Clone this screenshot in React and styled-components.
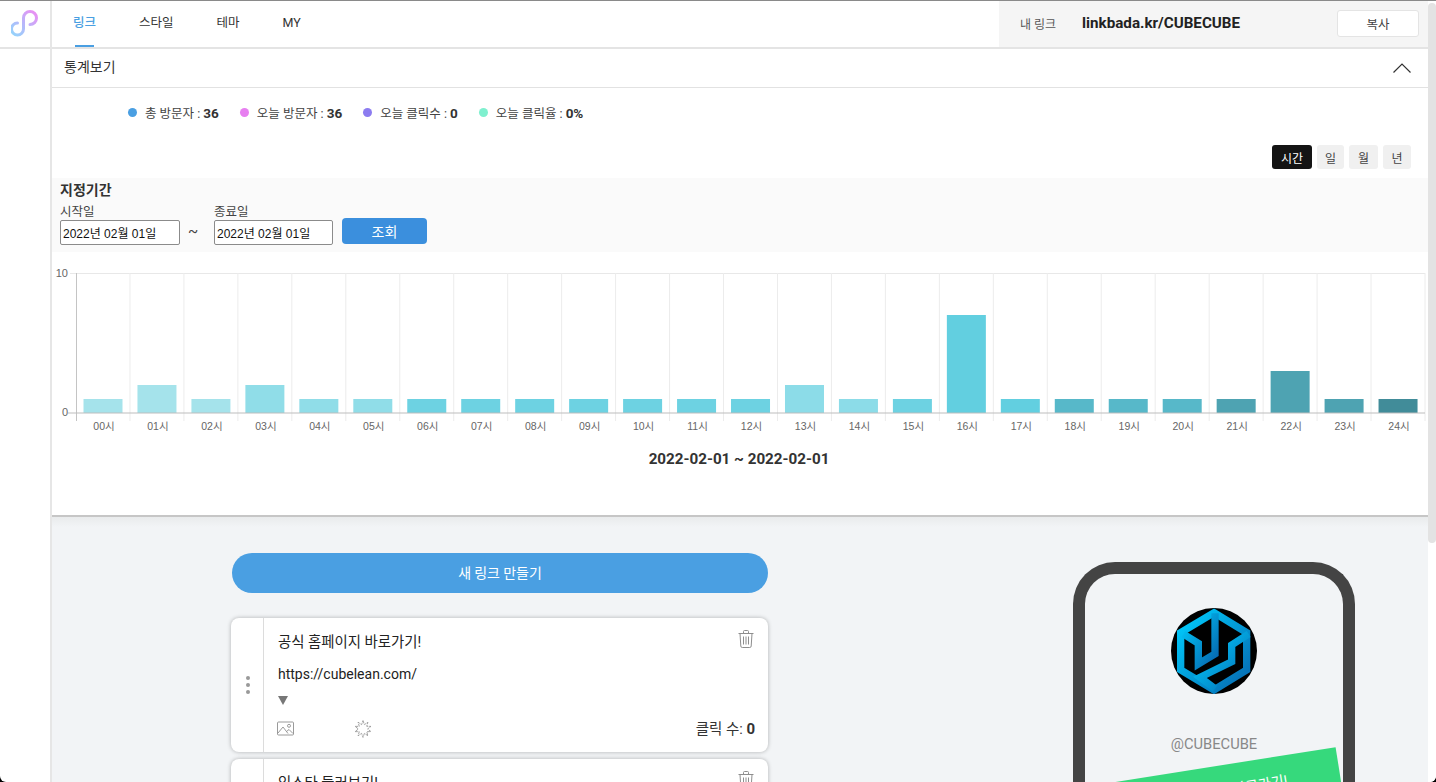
import React from 'react';
import styled, { createGlobalStyle } from 'styled-components';

const GlobalStyle = createGlobalStyle`
  html, body {
    margin: 0;
    padding: 0;
    height: 100%;
    overflow: hidden;
    background: #000;
  }
  * {
    box-sizing: border-box;
  }
  body {
    font-family: Roboto, "Noto Sans CJK KR", sans-serif;
    color: #333;
  }
`;

const Page = styled.div`
  display: flex;
  width: 1436px;
  height: 782px;
  overflow: hidden;
  background: #fff;
  border-top: 1px solid #8a8a8a;
  border-radius: 0 0 6px 6px;
`;

const Sidebar = styled.aside`
  flex: 0 0 52px;
  border-right: 2px solid #e6e6e6;
`;

const LogoCell = styled.div`
  display: flex;
  align-items: center;
  justify-content: center;
  height: 48px;
  border-bottom: 2px solid #e4e4e4;
  padding-bottom: 1px;
`;

const Main = styled.main`
  flex: 1;
  min-width: 0;
  display: flex;
  flex-direction: column;
`;

const ScrollTrack = styled.div`
  flex: 0 0 8px;
  background: #fff;
`;

const ScrollThumb = styled.div`
  height: 540px;
  margin-top: 2px;
  background: #e3e3e3;
  border-radius: 4px;
`;

const TopBar = styled.header`
  flex: 0 0 48px;
  display: flex;
  justify-content: space-between;
  border-bottom: 2px solid #e4e4e4;
`;

const Tabs = styled.nav`
  display: flex;
  gap: 43px;
  padding-left: 21px;
`;

const Tab = styled.a`
  position: relative;
  font-size: 12.5px;
  line-height: 43px;
  color: ${(p) => (p.$active ? '#4a9fe2' : '#333')};
  font-weight: ${(p) => (p.$active ? 500 : 400)};

  ${(p) =>
    p.$active &&
    `&::after {
      content: '';
      position: absolute;
      left: 2px;
      right: 2px;
      bottom: 0;
      height: 2px;
      background: #4a9fe2;
    }`}
`;

const MyLink = styled.div`
  width: 429px;
  display: flex;
  align-items: center;
  padding: 0 9px 2px 21px;
  background: #f5f5f5;
`;

const MyLinkLabel = styled.span`
  font-size: 12px;
  color: #555;
  width: 62px;
`;

const MyLinkUrl = styled.strong`
  flex: 1;
  font-size: 15.2px;
  font-weight: 700;
  color: #222;
`;

const CopyButton = styled.button`
  width: 82px;
  height: 27px;
  background: #fff;
  border: 1px solid #e4e4e4;
  border-radius: 3px;
  font: 12.5px "Noto Sans CJK KR", sans-serif;
  color: #444;
`;

const StatsPanel = styled.section`
  flex: 0 0 468px;
  border-bottom: 2px solid #c6c6c6;
  display: flex;
  flex-direction: column;
`;

const StatsHead = styled.div`
  flex: 0 0 39px;
  display: flex;
  align-items: center;
  justify-content: space-between;
  padding: 0 17px 4px 12px;
  border-bottom: 1px solid #e2e2e2;
  font-size: 14px;
  color: #333;

  svg {
    margin-top: 3px;
  }
`;

const Legend = styled.div`
  display: flex;
  gap: 21px;
  padding: 15px 0 0 76px;
  height: 48px;
`;

const LegendItem = styled.div`
  display: flex;
  align-items: center;
  gap: 8px;
  height: 18px;
  font-size: 12.5px;
  color: #444;

  b {
    font-size: 13.5px;
    font-weight: 700;
    color: #333;
  }
`;

const Dot = styled.i`
  width: 9px;
  height: 9px;
  border-radius: 50%;
  background: ${(p) => p.$color};
`;

const PeriodRow = styled.div`
  display: flex;
  justify-content: flex-end;
  gap: 5px;
  padding: 9px 17px 0 0;
  height: 42px;
`;

const PeriodButton = styled.button`
  width: ${(p) => p.$width}px;
  height: 24px;
  padding: 0;
  border: 0;
  border-radius: 3px;
  font: 12px "Noto Sans CJK KR", sans-serif;
  background: ${(p) => (p.$active ? '#141414' : '#f0f0f0')};
  color: ${(p) => (p.$active ? '#fff' : '#444')};
`;

const Filter = styled.div`
  flex: 0 0 74px;
  padding: 3px 8px 0;
  background: #fafafa;
`;

const FilterTitle = styled.h3`
  margin: 0;
  font-size: 14px;
  line-height: 18px;
  font-weight: 700;
  color: #333;
`;

const FilterRow = styled.div`
  display: flex;
  align-items: flex-end;
  margin-top: 4px;
`;

const DateField = styled.label`
  display: flex;
  flex-direction: column;
  font-size: 12.5px;
  line-height: 17px;
  color: #444;
`;

const DateInput = styled.input`
  width: ${(p) => p.$width}px;
  height: 25px;
  padding: 0 2px;
  background: #fff;
  border: 1px solid #8b8b8b;
  border-radius: 2px;
  font: 12px "Liberation Sans", "Noto Sans CJK KR", sans-serif;
  color: #111;
`;

const Tilde = styled.span`
  width: 34px;
  padding-right: 8px;
  text-align: center;
  line-height: 27px;
  font-size: 15px;
  color: #444;
`;

const SearchButton = styled.button`
  width: 85px;
  height: 26px;
  margin: 0 0 1px 9px;
  border: 0;
  border-radius: 4px;
  background: #3b8fdd;
  color: #fff;
  font: 14px "Noto Sans CJK KR", sans-serif;
`;

const ChartSvg = styled.svg`
  display: block;
  width: 1376px;
  height: 238px;
  margin-top: 10px;
`;

const ChartText = styled.text`
  font-family: "Liberation Sans", "Noto Sans CJK KR", sans-serif;
  font-size: ${(p) => p.$size || 10.5}px;
  fill: #666;
`;

const ChartCaption = styled.text`
  font-family: Roboto, sans-serif;
  font-size: 15.2px;
  font-weight: 700;
  fill: #333;
`;

const Lower = styled.div`
  flex: 1;
  min-height: 0;
  display: flex;
  overflow: hidden;
  background: linear-gradient(#e9ebec, #f2f4f6 10px);
`;

const LinkColumn = styled.div`
  width: 537px;
  margin-left: 179px;
  padding-top: 36px;
`;

const NewLinkButton = styled.button`
  display: block;
  width: 536px;
  height: 40px;
  margin-left: 1px;
  padding: 0 0 3px;
  border: 0;
  border-radius: 20px;
  background: #4a9fe2;
  color: #fff;
  font: 14px "Noto Sans CJK KR", sans-serif;
`;

const Card = styled.article`
  display: flex;
  height: 134px;
  margin-top: 25px;
  background: #fff;
  border-radius: 8px;
  box-shadow: 0 0 4px rgba(0, 0, 0, 0.28);

  & + & {
    margin-top: 7px;
  }
`;

const Handle = styled.div`
  flex: 0 0 33px;
  display: flex;
  flex-direction: column;
  align-items: center;
  justify-content: center;
  gap: 3px;
  padding-left: 2px;
  border-right: 1px solid #dcdcdc;

  i {
    width: 4px;
    height: 4px;
    border-radius: 50%;
    background: #999;
  }
`;

const CardBody = styled.div`
  flex: 1;
  padding: 12px 13px 0 14px;
`;

const CardRow = styled.div`
  display: flex;
  align-items: center;
  justify-content: space-between;
  height: 20px;
  font-size: 14.4px;
  color: #222;

  svg {
    margin: -2px 1px 0 0;
  }
`;

const UrlRow = styled(CardRow)`
  margin-top: 14px;
  font-size: 14px;
`;

const CaretRow = styled.div`
  margin-top: 12px;
  height: 9px;
`;

const Footer = styled.div`
  display: flex;
  align-items: center;
  gap: 60px;
  margin: 14px 0 0 -1px;
`;

const ClickCount = styled.div`
  margin-left: auto;
  margin-top: -2px;
  font-size: 14.5px;
  color: #333;

  b {
    font-size: 15px;
    font-weight: 700;
  }
`;

const Phone = styled.div`
  flex: 0 0 282px;
  height: 300px;
  margin: 45px 0 0 305px;
  padding-top: 34px;
  border: 12px solid #444;
  border-bottom: 0;
  border-radius: 42px 42px 0 0;
  text-align: center;
`;

const Avatar = styled.svg`
  display: block;
  width: 86px;
  height: 86px;
  margin: 0 auto;
`;

const Handlename = styled.div`
  margin-top: 40px;
  font-size: 14.7px;
  line-height: 20px;
  color: #888;
`;

const PhoneLink = styled.div`
  width: 245px;
  height: 50px;
  margin: 12px 0 0 11px;
  background: #36d97c;
  color: #fff;
  font-size: 14px;
  line-height: 50px;
  transform: rotate(-9deg);
`;

const hours = [1, 2, 1, 2, 1, 1, 1, 1, 1, 1, 1, 1, 1, 2, 1, 1, 7, 1, 1, 1, 1, 1, 3, 1, 1];
const barColors = [
  '#a5e3eb', '#a5e3eb', '#a5e3eb', '#90dde8', '#90dde8', '#90dde8', '#6dd2e2',
  '#6dd2e2', '#6dd2e2', '#6dd2e2', '#6dd2e2', '#6dd2e2', '#6dd2e2', '#8cdce8',
  '#8cdce8', '#6dd2e2', '#62cfe0', '#62cfe0', '#57b8c9', '#57b8c9', '#57b8c9',
  '#4ea3b2', '#4ea3b2', '#4ea3b2', '#418c99',
];

const legend = [
  { color: '#4a9fe2', label: '총 방문자 : ', value: '36' },
  { color: '#e77ff0', label: '오늘 방문자 : ', value: '36' },
  { color: '#8c7cf0', label: '오늘 클릭수 : ', value: '0' },
  { color: '#7ff0cf', label: '오늘 클릭율 : ', value: '0%' },
];

const periods = [
  { label: '시간', width: 40, active: true },
  { label: '일', width: 27 },
  { label: '월', width: 29 },
  { label: '년', width: 28 },
];

const links = [
  { title: '공식 홈페이지 바로가기!', url: 'https://cubelean.com/' },
  { title: '인스타 둘러보기!', url: '' },
];

function Logo() {
  return (
    <svg width="28" height="28" viewBox="12 12 28 28" fill="none">
      <defs>
        <linearGradient id="logoGrad" x1="0" y1="1" x2="1" y2="0">
          <stop offset="0" stopColor="#93d5fb" />
          <stop offset="0.5" stopColor="#b9b5fa" />
          <stop offset="1" stopColor="#ee8cf2" />
        </linearGradient>
      </defs>
      <path
        d="M31 26.5A6.5 6.5 0 1 0 24.5 20V31A6 6 0 1 1 18.5 25"
        stroke="url(#logoGrad)"
        strokeWidth="3"
        strokeLinecap="round"
      />
    </svg>
  );
}

function Chevron() {
  return (
    <svg width="18" height="10" viewBox="0 0 18 10" fill="none">
      <path d="M0.5 9.5L9 1L17.5 9.5" stroke="#333" strokeWidth="1.2" />
    </svg>
  );
}

function Chart() {
  const left = 76;
  const step = 53.96;
  return (
    <ChartSvg viewBox="52 262 1376 238">
      <line x1="70" x2="1425" y1="273.5" y2="273.5" stroke="#e8e8e8" />
      {hours.map((_, i) => (
        <line
          key={i}
          x1={left + step * (i + 1)}
          x2={left + step * (i + 1)}
          y1="273"
          y2="421"
          stroke="#ececec"
        />
      ))}
      <line x1="76.5" x2="76.5" y1="273" y2="421" stroke="#c4c4c4" />
      {hours.map((v, i) => (
        <rect
          key={i}
          x={left + step * i + 7.5}
          y={413 - v * 14}
          width="39"
          height={v * 14}
          fill={barColors[i]}
        />
      ))}
      <line x1="68" x2="1425" y1="413" y2="413" stroke="#bdbdbd" />
      <ChartText x="68" y="277" textAnchor="end" $size={11}>10</ChartText>
      <ChartText x="68" y="416" textAnchor="end" $size={11}>0</ChartText>
      {hours.map((_, i) => (
        <ChartText key={i} x={left + step * i + 28} y="430" textAnchor="middle">
          {String(i).padStart(2, '0')}시
        </ChartText>
      ))}
      <ChartCaption x="739" y="464" textAnchor="middle">2022-02-01 ~ 2022-02-01</ChartCaption>
    </ChartSvg>
  );
}

function TrashIcon() {
  return (
    <svg width="16" height="18" viewBox="0 0 16 18" fill="none" stroke="#8e8e8e" strokeWidth="1">
      <path d="M0.5 3.5H15.5M5.5 3.5V1.5A1 1 0 0 1 6.5 0.5H9.5A1 1 0 0 1 10.5 1.5V3.5" />
      <path d="M2 3.5L2.8 16A1.5 1.5 0 0 0 4.3 17.5H11.7A1.5 1.5 0 0 0 13.2 16L14 3.5" />
      <path d="M5.5 6.5V14.5M8 6.5V14.5M10.5 6.5V14.5" />
    </svg>
  );
}

function ImageIcon() {
  return (
    <svg width="17" height="15" viewBox="0 0 17 15" fill="none" stroke="#8e8e8e" strokeWidth="0.9">
      <rect x="0.5" y="1" width="16" height="13" rx="1" />
      <path d="M1 12L6 6L11 12.5M9.5 10.5L12 8.5L16 12.5" />
      <circle cx="12" cy="4.8" r="1.5" />
    </svg>
  );
}

function BurstIcon() {
  const points = Array.from({ length: 20 }, (_, i) => {
    const a = (i * Math.PI) / 10 - Math.PI / 2;
    const r = i % 2 ? 4.6 : 8.4;
    return `${(Math.cos(a) * r).toFixed(2)},${(Math.sin(a) * r).toFixed(2)}`;
  });
  return (
    <svg width="18" height="18" viewBox="-9 -9 18 18" fill="none" stroke="#8e8e8e" strokeWidth="0.8">
      <polygon points={points.join(' ')} strokeDasharray="3 0.8" />
    </svg>
  );
}

function Caret() {
  return (
    <svg width="10" height="9" viewBox="0 0 10 9" style={{ display: 'block' }}>
      <path d="M0 0H10L5 9Z" fill="#777" />
    </svg>
  );
}

function CubeLogo() {
  return (
    <Avatar viewBox="63 54 258 258">
      <defs>
        <linearGradient id="cubeGrad" x1="0" y1="0" x2="1" y2="1">
          <stop offset="0" stopColor="#00cfff" />
          <stop offset="1" stopColor="#0668b0" />
        </linearGradient>
      </defs>
      <circle cx="192" cy="183" r="129" fill="#000" />
      <g fill="none" stroke="url(#cubeGrad)" strokeWidth="22" strokeLinejoin="miter">
        <path d="M192 68L290 128V240L192 300L92 240V128Z" />
        <path d="M100 132L145 160V222L195 192V70" />
        <path d="M296 132L245 165V215L150 262L195 296" />
      </g>
    </Avatar>
  );
}

function App() {
  return (
    <Page>
      <GlobalStyle />
      <Sidebar>
        <LogoCell>
          <Logo />
        </LogoCell>
      </Sidebar>
      <Main>
        <TopBar>
          <Tabs>
            <Tab $active>링크</Tab>
            <Tab>스타일</Tab>
            <Tab>테마</Tab>
            <Tab>MY</Tab>
          </Tabs>
          <MyLink>
            <MyLinkLabel>내 링크</MyLinkLabel>
            <MyLinkUrl>linkbada.kr/CUBECUBE</MyLinkUrl>
            <CopyButton>복사</CopyButton>
          </MyLink>
        </TopBar>
        <StatsPanel>
          <StatsHead>
            통계보기
            <Chevron />
          </StatsHead>
          <Legend>
            {legend.map((item) => (
              <LegendItem key={item.label}>
                <Dot $color={item.color} />
                <span>
                  {item.label}
                  <b>{item.value}</b>
                </span>
              </LegendItem>
            ))}
          </Legend>
          <PeriodRow>
            {periods.map((p) => (
              <PeriodButton key={p.label} $width={p.width} $active={p.active}>
                {p.label}
              </PeriodButton>
            ))}
          </PeriodRow>
          <Filter>
            <FilterTitle>지정기간</FilterTitle>
            <FilterRow>
              <DateField>
                시작일
                <DateInput $width={120} value="2022년 02월 01일" readOnly />
              </DateField>
              <Tilde>~</Tilde>
              <DateField>
                종료일
                <DateInput $width={119} value="2022년 02월 01일" readOnly />
              </DateField>
              <SearchButton>조회</SearchButton>
            </FilterRow>
          </Filter>
          <Chart />
        </StatsPanel>
        <Lower>
          <LinkColumn>
            <NewLinkButton>새 링크 만들기</NewLinkButton>
            {links.map((link) => (
              <Card key={link.title}>
                <Handle>
                  <i />
                  <i />
                  <i />
                </Handle>
                <CardBody>
                  <CardRow>
                    {link.title}
                    <TrashIcon />
                  </CardRow>
                  <UrlRow>{link.url}</UrlRow>
                  <CaretRow>
                    <Caret />
                  </CaretRow>
                  <Footer>
                    <ImageIcon />
                    <BurstIcon />
                    <ClickCount>
                      클릭 수: <b>0</b>
                    </ClickCount>
                  </Footer>
                </CardBody>
              </Card>
            ))}
          </LinkColumn>
          <Phone>
            <CubeLogo />
            <Handlename>@CUBECUBE</Handlename>
            <PhoneLink>공식 홈페이지 바로가기!</PhoneLink>
          </Phone>
        </Lower>
      </Main>
      <ScrollTrack>
        <ScrollThumb />
      </ScrollTrack>
    </Page>
  );
}

export default App;
